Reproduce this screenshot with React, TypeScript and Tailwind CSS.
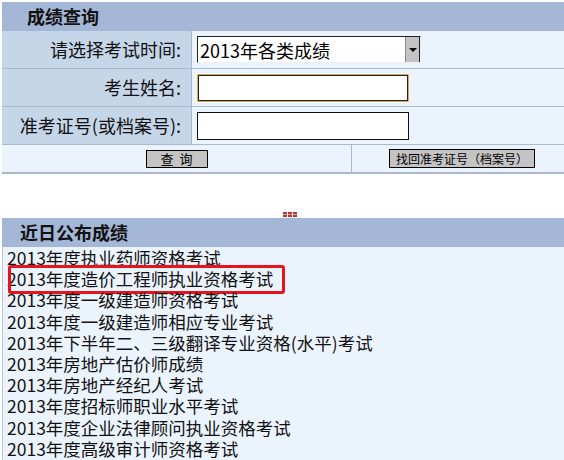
const FONT = "font-['Noto_Sans_CJK_SC',sans-serif]";

const recent = [
  '2013年度执业药师资格考试',
  '2013年度造价工程师执业资格考试',
  '2013年度一级建造师资格考试',
  '2013年度一级建造师相应专业考试',
  '2013年下半年二、三级翻译专业资格(水平)考试',
  '2013年房地产估价师成绩',
  '2013年房地产经纪人考试',
  '2013年度招标师职业水平考试',
  '2013年度企业法律顾问执业资格考试',
  '2013年度高级审计师资格考试',
];

function FormRow({ label, children }: { label: string; children: React.ReactNode }) {
  return (
    <div className="flex h-[38px] border-b border-[#a9b9d1]">
      <div className="w-[190px] bg-[#c6d6e9] border-r border-[#a9b9d1] flex items-center justify-end pr-[10px] text-[18px] text-[#111]">
        {label}
      </div>
      <div className="flex-1 bg-[#ebf3fd] flex items-center pl-[5px]">{children}</div>
    </div>
  );
}

function Handle() {
  return (
    <div className="flex gap-[1px]">
      {[0, 1, 2].map((i) => (
        <div key={i} className="w-[4px] h-[5px] bg-[#b8332f] flex flex-col justify-center">
          <div className="h-[1px] bg-[#e8a0a0]" />
        </div>
      ))}
    </div>
  );
}

export default function App() {
  return (
    <div className={`w-[564px] h-[460px] bg-white pl-[2px] pt-[2px] overflow-hidden ${FONT}`}>
      {/* query panel */}
      <div>
        <div className="h-[29px] bg-[#a4b7d7] flex items-center pl-[25px] text-[18px] font-bold text-[#111]">
          成绩查询
        </div>
        <FormRow label="请选择考试时间:">
          <div className="w-[224px] h-[27px] flex border border-[#222] border-r-[#eee] border-b-[#eee] bg-white">
            <div className="flex-1 flex items-center pl-[2px] text-[18px] leading-none text-black">2013年各类成绩</div>
            <div className="w-[15px] bg-[#c4c4c4] border-l border-[#888] border-r border-r-[#222] flex items-center justify-center">
              <div className="w-0 h-0 border-l-[4px] border-r-[4px] border-t-[4px] border-l-transparent border-r-transparent border-t-black" />
            </div>
          </div>
        </FormRow>
        <FormRow label="考生姓名:">
          <div className="w-[212px] h-[28px] border border-[#d8a848] rounded-[1px]">
            <div className="w-full h-full border border-[#222] bg-white" />
          </div>
        </FormRow>
        <FormRow label="准考证号(或档案号):">
          <div className="w-[212px] h-[28px] border border-[#111] bg-white" />
        </FormRow>
        <div className="flex h-[29px] border-b-2 border-[#a9b9d1]">
          <div className="w-[350px] bg-[#ebf3fd] border-r border-[#a9b9d1] flex items-center justify-center">
            <button className="w-[62px] h-[18px] bg-[#c4c4c4] border border-black text-[13px] leading-none text-black tracking-[6px] pl-[6px]">
              查询
            </button>
          </div>
          <div className="flex-1 bg-[#ebf3fd] flex items-center justify-center pl-[8px]">
            <button className="w-[146px] h-[19px] bg-[#c4c4c4] border border-black text-[12px] leading-none text-black">
              找回准考证号（档案号）
            </button>
          </div>
        </div>
      </div>

      <div className="h-[38px]" />
      <div className="flex justify-end pr-[267px] h-[6px]">
        <Handle />
      </div>

      {/* recent results panel */}
      <div>
        <div className="h-[29px] bg-[#a4b7d7] flex items-center pl-[18px] text-[18px] font-bold text-[#111]">
          近日公布成绩
        </div>
        <ul className="bg-[#ebf3fd] border-l border-[#b9c7db] pl-[4px] h-[220px]">
          {recent.map((t, i) => (
            <li key={t} className="relative text-[17.5px] leading-[21.2px] text-[#111] whitespace-nowrap">
              {t}
              {i === 1 && (
                <span className="absolute left-[1px] top-[-3px] w-[277px] h-[29px] border-[3px] border-[#e8141c] rounded-[3px]" />
              )}
            </li>
          ))}
        </ul>
      </div>
    </div>
  );
}
